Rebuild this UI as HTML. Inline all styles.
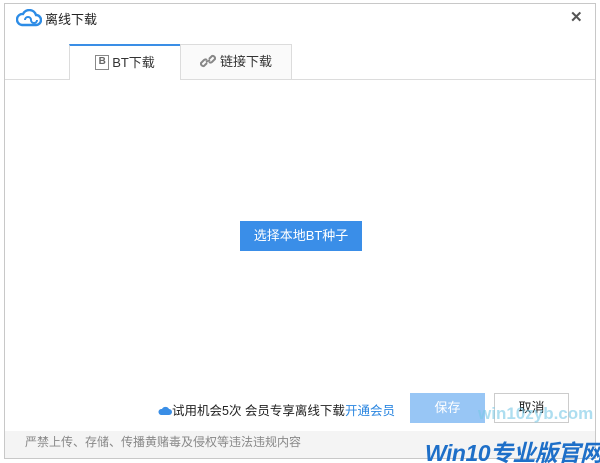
<!DOCTYPE html>
<html><head><meta charset="utf-8"><style>
*{margin:0;padding:0;box-sizing:border-box}
html,body{width:600px;height:463px;overflow:hidden}
body{background:#fff;font-family:"Liberation Sans","Noto Sans CJK SC",sans-serif;position:relative;font-size:12px;color:#333}
.win{position:absolute;left:4px;top:3px;width:592px;height:456px;border:1px solid #c8c8c8;background:#fff}
.title{position:absolute;left:45px;top:9px;font-size:13px;color:#222}
.close{position:absolute;left:570px;top:8px;font-size:15px;color:#555;font-weight:bold}
.tabline{position:absolute;left:5px;top:79px;width:590px;height:1px;background:#dcdcdc}
.tab{position:absolute;top:44px;height:36px;border:1px solid #dcdcdc;border-bottom:none;background:#fff;font-size:13px;line-height:34px;text-align:center;white-space:nowrap}
.t1{left:69px;width:112px;border-top:2px solid #3a8ee6}
.t2{left:180px;width:112px;background:#fafafa;border-bottom:1px solid #dcdcdc}
.bico{display:inline-block;width:14px;height:15px;border:1.5px solid #888;font-size:10px;line-height:12px;color:#666;font-weight:bold;vertical-align:middle;margin-right:3px;margin-top:-3px;text-align:center}
.btn{position:absolute;left:240px;top:221px;width:122px;height:30px;background:#3a8ee8;color:#fff;font-size:13px;line-height:30px;text-align:center}
.trial{position:absolute;left:158px;top:400px;font-size:12.5px;color:#222;white-space:nowrap}
.trial a{color:#2b86e0}
.save{position:absolute;left:410px;top:393px;width:75px;height:30px;background:#98c6f5;color:#fff;font-size:13px;line-height:30px;text-align:center}
.cancel{position:absolute;left:494px;top:393px;width:75px;height:30px;border:1px solid #ccc;background:#fff;color:#222;font-size:13px;line-height:28px;text-align:center}
.foot{position:absolute;left:5px;top:431px;width:590px;height:27px;background:#f4f4f4;color:#888;font-size:12px;line-height:22px;padding-left:20px;white-space:nowrap}
.wm1{position:absolute;left:478px;top:404px;font-size:17px;font-weight:bold;color:rgba(120,200,230,.6);white-space:nowrap}
.wm2{position:absolute;left:425px;top:434px;font-size:23px;font-weight:bold;font-style:italic;color:#1e6fc8;white-space:nowrap;letter-spacing:-0.5px}
</style></head><body>
<div class="win"></div>
<svg style="position:absolute;left:16px;top:9px" width="26" height="18" viewBox="0 0 26 18"><path d="M6 16 H20 A5 5 0 0 0 20 6 A7 7 0 0 0 7 5 A5.5 5.5 0 0 0 6 16 Z" fill="none" stroke="#2d8ce6" stroke-width="2.4"/><path d="M9 11 a3 3 0 0 1 6 0 a3 3 0 0 0 6 0" fill="none" stroke="#2d8ce6" stroke-width="2"/></svg>
<div class="title">离线下载</div>
<div class="close">✕</div>
<div class="tabline"></div>
<div class="tab t1"><span class="bico">B</span>BT下载</div>
<div class="tab t2"><svg width="16" height="14" viewBox="0 0 16 14" style="vertical-align:middle;margin-right:4px;margin-top:-3px"><path d="M7 9 L4 12 a2.5 2.5 0 0 1 -3 -3 L4 6 a2.5 2.5 0 0 1 3 0 M9 5 L12 2 a2.5 2.5 0 0 1 3 3 L12 8 a2.5 2.5 0 0 1 -3 0 M6 8 L10 6" fill="none" stroke="#888" stroke-width="2"/></svg>链接下载</div>
<div class="btn">选择本地BT种子</div>
<div class="trial"><svg width="14" height="10" viewBox="0 0 14 10" style="vertical-align:middle;margin-top:-2px"><path d="M3 9 H11 A3 3 0 0 0 11 3 A4 4 0 0 0 4 3 A3 3 0 0 0 3 9Z" fill="#3a8ee6"/></svg>试用机会5次 会员专享离线下载<a>开通会员</a></div>
<div class="save">保存</div>
<div class="cancel">取消</div>
<div class="foot">严禁上传、存储、传播黄赌毒及侵权等违法违规内容</div>
<div class="wm1">win10zyb.com</div>
<div class="wm2">Win10专业版官网</div>
</body></html>
